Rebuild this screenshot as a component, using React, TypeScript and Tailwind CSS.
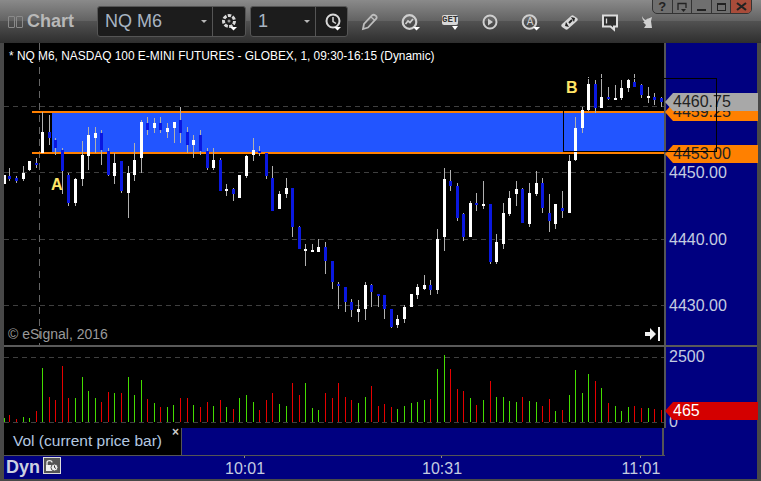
import React from 'react'

// x, wick top, wick bottom, body top, body bottom, 1 = up (white) 0 = down (blue)
const candles: number[][] = [
  [4,175,184,175,184,1],[9,168,181,176,179,0],[16,176,183,178,181,0],[23,166,181,173,179,1],[29,161,171,161,170,1],
  [36,158,168,163,165,0],[42,112,153,132,153,1],[49,115,145,132,138,0],[55,138,155,140,148,0],[62,148,194,150,171,0],
  [68,173,206,175,203,0],[75,178,206,179,203,1],[82,141,186,155,179,1],[88,127,170,135,156,1],[95,127,153,133,138,1],
  [101,130,165,133,150,0],[108,148,176,151,175,0],[114,153,184,163,176,1],[121,161,193,161,191,0],[128,166,218,173,193,1],
  [134,143,181,160,175,1],[141,120,173,122,158,1],[147,117,135,123,130,0],[154,118,133,123,128,1],[160,117,133,123,130,0],
  [167,123,138,128,132,1],[174,122,143,122,128,1],[180,107,143,120,133,0],[187,127,153,132,145,0],[193,135,158,140,145,1],
  [200,130,155,135,151,0],[207,148,170,151,168,0],[213,148,170,160,168,1],[220,158,191,160,191,0],[226,184,196,189,191,1],
  [233,188,201,189,194,0],[239,175,198,175,198,1],[246,155,178,156,176,1],[253,138,161,150,155,1],[259,146,156,151,153,0],
  [266,153,179,153,176,0],[272,166,211,178,211,0],[279,191,209,194,209,1],[286,178,198,188,194,1],[292,188,237,188,227,0],
  [299,226,249,227,249,0],[305,244,266,249,251,1],[312,244,252,250,252,1],[318,239,252,247,252,1],[325,242,274,247,261,0],
  [332,261,289,261,282,0],[338,282,309,284,286,0],[345,287,312,287,302,0],[351,299,317,302,310,0],[358,300,322,309,312,1],
  [365,282,320,285,309,1],[371,284,307,285,292,0],[378,294,307,294,296,0],[384,295,319,295,309,0],[391,309,328,309,327,0],
  [397,315,328,319,325,1],[404,305,323,307,319,1],[411,294,307,294,307,1],[417,284,299,287,295,1],[424,275,290,285,289,1],
  [430,280,295,285,290,0],[437,229,294,239,290,1],[444,168,251,179,237,1],[450,170,191,181,186,0],[457,183,221,186,218,0],
  [463,213,241,214,237,0],[470,201,237,203,237,1],[476,193,211,203,205,0],[483,181,209,204,206,1],[490,204,264,204,262,0],
  [496,234,264,242,262,1],[503,203,249,213,244,1],[509,191,216,198,214,1],[516,181,206,189,194,1],[522,188,223,189,223,0],
  [529,183,227,193,224,1],[536,171,196,183,194,1],[542,178,213,183,208,0],[549,194,232,213,221,0],[555,204,229,204,224,1],
  [562,191,218,208,211,0],[569,155,213,161,213,1],[575,117,161,128,160,1],[582,107,133,110,128,1],[588,77,111,84,110,1],
  [595,80,113,84,108,0],[601,74,108,97,108,1],[608,87,100,97,99,0],[615,85,100,98,100,1],[621,80,100,88,98,1],
  [628,79,92,80,88,1],[634,74,87,82,87,0],[641,84,98,85,95,0],[648,87,103,96,98,1],[654,93,105,97,100,0],[661,97,107,98,102,0],
]

// x, top of bar, 1 = green 0 = red
const volume: number[][] = [
  [4,417,1],[9,414,0],[16,418,0],[23,416,1],[29,417,1],[36,410,0],[42,367,1],[49,396,0],[55,399,0],[62,365,0],
  [68,397,0],[75,397,1],[82,376,1],[88,390,1],[95,397,1],[101,401,0],[108,391,0],[114,392,1],[121,392,0],[128,376,1],
  [134,394,1],[141,379,1],[147,398,0],[154,402,1],[160,406,0],[167,406,1],[173,404,1],[180,397,0],[187,397,0],[193,404,1],
  [200,406,0],[207,401,0],[213,405,1],[220,399,0],[226,406,1],[233,408,0],[239,397,1],[246,394,1],[253,401,1],[259,409,0],
  [266,399,0],[272,392,0],[279,403,1],[286,405,1],[292,382,0],[299,394,0],[305,382,1],[312,407,1],[318,409,1],[325,392,0],
  [332,397,0],[338,382,0],[345,396,0],[351,399,0],[358,402,1],[365,396,1],[371,385,0],[378,405,0],[384,403,0],[391,406,0],
  [397,408,1],[404,405,1],[411,402,1],[417,401,1],[424,399,1],[430,398,0],[437,368,1],[444,354,1],[450,368,0],[457,388,0],
  [463,390,0],[470,397,1],[476,404,0],[483,399,1],[490,380,0],[496,396,1],[503,396,1],[509,400,1],[516,401,1],[522,396,0],
  [529,400,1],[536,401,1],[542,405,0],[549,398,0],[555,410,1],[562,409,0],[569,394,1],[575,369,1],[582,392,1],[588,373,1],
  [595,380,0],[601,387,1],[608,402,0],[615,405,1],[621,410,1],[628,406,1],[634,405,0],[641,407,0],[648,407,1],[654,408,0],[661,409,0],
]

const Caret = () => <span className="w-0 h-0 border-x-[3px] border-x-transparent border-t-[3px] border-t-[#b8b8b8]" />

const ToolIcon = ({ className, children }: { className: string; children: React.ReactNode }) => (
  <svg width="20" height="20" viewBox="0 0 20 20" fill="none" className={className}>{children}</svg>
)

const DropMark = () => <path d="M13 15h7l-3.500 3.500z" fill="#fff" />

const PriceTag = ({ top, color, text, label }: { top: number; color: string; text: string; label: string }) => (
  <div
    className={`absolute left-[-1px] w-[93px] h-[18px] pl-[8px] text-[16px] leading-[18px] [clip-path:polygon(0_50%,8px_0,100%_0,100%_100%,8px_100%)] ${color} ${text}`}
    style={{ top }}
  >
    {label}
  </div>
)

const App = () => {
  return (
    <div className="relative w-[761px] h-[481px] overflow-hidden flex flex-col bg-[#484848] font-['Liberation_Sans',Arial,sans-serif]">

      {/* toolbar */}
      <div className="h-[43px] shrink-0 flex items-center bg-[linear-gradient(#8a8a8a_0,#626262_21px,#525252_21px,#2e2e2e_43px)]">
        <div className="ml-[8px] flex gap-[1px]">
          <span className="w-[7px] h-[12px] border border-[#8a8a8a] rounded-[1px]" />
          <span className="w-[7px] h-[12px] border border-[#8a8a8a] rounded-[1px]" />
        </div>
        <span className="ml-[4px] w-[70px] text-[18px] font-bold text-[#b8b8b8]">Chart</span>

        <div className="w-[149px] h-[31px] flex items-center rounded-[3px] border border-[#555] bg-[#1c1c1c]">
          <span className="ml-[7px] w-[96px] text-[18px] text-[#a8b4c2]">NQ M6</span>
          <Caret />
          <div className="ml-[5px] w-px h-full bg-[#555]" />
          <svg width="20" height="20" viewBox="0 0 20 20" fill="none" className="ml-[7px]">
            <circle cx="9" cy="9" r="5.500" stroke="#d8d8d8" strokeWidth="3" strokeDasharray="3.500 1.300" />
            <circle cx="9" cy="9" r="1.500" fill="#999" />
            <path d="M10 15h7l-3.500 3.500z" fill="#fff" />
          </svg>
        </div>

        <div className="ml-[4px] w-[98px] h-[31px] flex items-center rounded-[3px] border border-[#555] bg-[#1c1c1c]">
          <span className="ml-[7px] w-[46px] text-[18px] text-[#a8b4c2]">1</span>
          <Caret />
          <div className="ml-[5px] w-px h-full bg-[#555]" />
          <svg width="20" height="20" viewBox="0 0 20 20" fill="none" className="ml-[8px]">
            <circle cx="9" cy="9" r="6.500" stroke="#d8d8d8" strokeWidth="2" />
            <path d="M9 5v4.500l3 2" stroke="#d8d8d8" strokeWidth="1.500" />
            <path d="M10 15h7l-3.500 3.500z" fill="#fff" />
          </svg>
        </div>

        {/* pencil */}
        <ToolIcon className="ml-[12px]">
          <path d="M3 17l1-5 8-8.500c1-1 2-1 3.500 0s1.500 2.500.5 3.500l-8 8.500z" stroke="#bdbdbd" strokeWidth="1.800" />
          <path d="M11 5l4 3.500" stroke="#bdbdbd" strokeWidth="1.200" />
        </ToolIcon>
        {/* chart circle */}
        <ToolIcon className="ml-[20px]">
          <circle cx="9.500" cy="10" r="6.800" stroke="#cfcfcf" strokeWidth="2.200" />
          <path d="M5.500 12l2.500-3 2 1.500 3-3.500" stroke="#cfcfcf" strokeWidth="1.700" />
          <DropMark />
        </ToolIcon>
        {/* GET */}
        <div className="ml-[22px] relative w-[20px] h-[20px] flex justify-start">
          <span className="mt-[3px] w-[16px] h-[10px] rounded-[2px] bg-[#d8d8d8] text-[9px] leading-[10px] font-bold text-[#333] text-center font-['Liberation_Mono',monospace]">GET</span>
          <span className="absolute left-[10px] top-[14px] w-0 h-0 border-x-[3px] border-x-transparent border-t-[4px] border-t-white" />
        </div>
        {/* play */}
        <ToolIcon className="ml-[18px]">
          <circle cx="10" cy="10" r="6.500" stroke="#cfcfcf" strokeWidth="2" />
          <path d="M8 6.500l5 3.500-5 3.500z" fill="#cfcfcf" />
        </ToolIcon>
        {/* alert */}
        <div className="ml-[20px] relative w-[20px] h-[20px]">
          <svg width="20" height="20" viewBox="0 0 20 20" fill="none" className="absolute inset-0">
            <circle cx="9.500" cy="10" r="6.800" stroke="#cfcfcf" strokeWidth="2" />
            <DropMark />
          </svg>
          <span className="absolute left-[5px] top-[4px] w-[10px] text-center text-[10px] leading-[12px] text-[#cfcfcf]">A</span>
        </div>
        {/* diamond */}
        <ToolIcon className="ml-[20px]">
          <path d="M2 12l9-8c1-1 2-1 3 0l3 2c1 1 1 2 0 3l-9 8c-1 1-2 1-3 0l-3-2c-1-1-1-2 0-3z" fill="#d8d8d8" />
          <path d="M11 5l4 1-1 4zM9 15l-4-1 1-4z" fill="#222" />
          <path d="M9 11l3-3" stroke="#222" strokeWidth="2" />
        </ToolIcon>
        {/* comment */}
        <ToolIcon className="ml-[20px]">
          <path d="M3 3.500h14v11h-3v3l-3.500-3H3z" stroke="#dcdcdc" strokeWidth="2" fill="#2e2e2e" />
          <path d="M6.500 6.500v5" stroke="#dcdcdc" strokeWidth="1.300" />
        </ToolIcon>
        {/* twitter */}
        <ToolIcon className="ml-[20px]">
          <path d="M2 4c1 2 2 3.500 4 4 .5-1 1.500-1.500 2.500-1.500L12 5l-1 4 1 7H4l2-3-3-3c1 0 1 0 1.500-.5C3 8.500 2 6.500 2 4z" fill="#cfcfcf" />
        </ToolIcon>
      </div>

      {/* window buttons */}
      <div className="absolute top-[-1px] left-[652px] w-[100px] h-[15px] flex rounded-b-[5px] border border-[#333] bg-[#6f6f6f] overflow-hidden">
        <span className="w-[20px] border-r border-[#333] text-center text-[13px] leading-[14px] font-bold text-[#222]">?</span>
        <span className="w-[20px] border-r border-[#333] flex items-center justify-center">
          <svg width="12" height="12" viewBox="0 0 12 12" fill="none">
            <path d="M2 9V2.500h8V7" stroke="#222" strokeWidth="1.300" />
            <path d="M5 8h5L7.500 11z" fill="#222" />
          </svg>
        </span>
        <span className="w-[20px] border-r border-[#333] flex items-end justify-center pb-[2px]">
          <span className="w-[9px] h-[2px] bg-[#222]" />
        </span>
        <span className="w-[20px] border-r border-[#333] flex items-center justify-center">
          <span className="w-[9px] h-[8px] border border-[#222] border-t-2" />
        </span>
        <span className="w-[20px] flex items-center justify-center bg-[#a84c3a]">
          <svg width="11" height="9" viewBox="0 0 11 9" fill="none">
            <path d="M1 1l9 7M10 1l-9 7" stroke="#222" strokeWidth="2.200" />
          </svg>
        </span>
      </div>

      {/* price pane */}
      <div className="ml-[4px] mr-[4px] h-[302px] shrink-0 flex">
        <div className="relative w-[660px] bg-black overflow-hidden">
          <svg width="660" height="302" viewBox="4 43 660 302" className="absolute inset-0">
            {[106, 172, 239, 305].map((y) => (
              <line key={y} x1="4" x2="664" y1={y + 0.5} y2={y + 0.5} stroke="#3f3f3f" strokeDasharray="5 4" />
            ))}
            <line x1="39.500" x2="39.500" y1="43" y2="345" stroke="#666" strokeDasharray="7 5" />
            <rect x="52" y="113" width="612" height="39" fill="#2255ff" />
            <rect x="32" y="111" width="632" height="2" fill="#ff8000" />
            <rect x="32" y="152" width="632" height="2" fill="#ff8000" />
            {candles.map(([x, wt, wb, bt, bb, up]) => (
              <g key={x}>
                <line x1={x + 0.5} x2={x + 0.5} y1={wt} y2={wb} stroke="#b0b0b0" />
                <rect x={x - 1} y={bt} width="3" height={bb - bt} fill={up ? '#ffffff' : '#0a18e0'} />
              </g>
            ))}
          </svg>
          <span className="absolute left-[5px] top-[6px] text-[11.900px] leading-[14px] whitespace-nowrap text-white">* NQ M6, NASDAQ 100 E-MINI FUTURES - GLOBEX, 1, 09:30-16:15 (Dynamic)</span>
          <span className="absolute left-[47px] top-[134px] text-[16px] leading-[16px] font-bold text-[#ffe566]">A</span>
          <span className="absolute left-[562px] top-[37px] text-[16px] leading-[16px] font-bold text-[#ffe566]">B</span>
          <span className="absolute left-[4px] top-[283px] text-[14px] leading-[16px] text-[#9a9a9a]">© eSignal, 2016</span>
          <svg width="16" height="14" viewBox="0 0 16 14" className="absolute left-[641px] top-[284px]">
            <path d="M0 5h5V1l6 6-6 6V9H0z" fill="#f0f0f0" />
            <rect x="13" y="0" width="2" height="14" fill="#f0f0f0" />
          </svg>
        </div>
        <div className="relative flex-1 border-l-2 border-[#555] bg-[#000080] text-[16px] leading-[18px] text-[#c4cce0]">
          <span className="absolute left-[3px] top-[121px]">4450.00</span>
          <span className="absolute left-[3px] top-[188px]">4440.00</span>
          <span className="absolute left-[3px] top-[254px]">4430.00</span>
          <PriceTag top={60} color="bg-[#ff8000]" text="text-[#222]" label="4459.25" />
          <PriceTag top={50} color="bg-[#a8a8a8]" text="text-[#222]" label="4460.75" />
          <PriceTag top={102} color="bg-[#ff8000]" text="text-[#222]" label="4453.00" />
        </div>
      </div>

      <div className="ml-[4px] mr-[4px] h-[2px] shrink-0 bg-[#5a5a5a]" />

      {/* volume pane */}
      <div className="ml-[4px] mr-[4px] h-[81px] shrink-0 flex">
        <div className="relative w-[660px] bg-black">
          <svg width="660" height="81" viewBox="4 346 660 81" className="absolute inset-0">
            <line x1="4" x2="664" y1="356.500" y2="356.500" stroke="#3f3f3f" strokeDasharray="5 4" />
            {volume.map(([x, top, up]) => (
              <rect key={x} x={x} y={top} width="1" height={421 - top} fill={up ? '#44dd00' : '#e60000'} />
            ))}
            <line x1="4" x2="664" y1="421.500" y2="421.500" stroke="#3f3f3f" strokeDasharray="5 4" />
          </svg>
        </div>
        <div className="relative flex-1 border-l-2 border-[#555] bg-[#000080] text-[16px] leading-[18px] text-[#c4cce0]">
          <span className="absolute left-[3px] top-[1px]">2500</span>
          <span className="absolute left-[3px] top-[66px]">0</span>
          <PriceTag top={55} color="bg-[#d40000]" text="text-white" label="465" />
        </div>
      </div>

      {/* study tab row */}
      <div className="ml-[4px] mr-[4px] h-[27px] shrink-0 flex">
        <div className="relative w-[178px] bg-black border-r border-[#555]">
          <span className="absolute left-[9px] top-[4px] text-[15.500px] leading-[18px] whitespace-nowrap text-[#b4c8e0]">Vol (current price bar)</span>
          <span className="absolute right-[2px] top-[-2px] text-[12px] leading-[12px] font-bold text-[#ccc]">×</span>
        </div>
        <div className="w-[482px] bg-[#000080] border-r-2 border-[#555]" />
        <div className="flex-1 bg-[#000080]" />
      </div>

      {/* time axis */}
      <div className="relative ml-[4px] mr-[4px] h-[24px] shrink-0 bg-[#000080]">
        <div className="h-px w-[661px] bg-[#555]" />
        <span className="absolute left-[2px] top-[2px] text-[18px] leading-[20px] font-bold text-[#ccd0e0]">Dyn</span>
        <span className="absolute left-[39px] top-[2px] w-[18px] h-[17px] border border-[#ddd] bg-[#555] flex items-center justify-center">
          <svg width="14" height="13" viewBox="0 0 14 13" fill="none">
            <path d="M2 6V3.500C2 1 7 1 7 3.500" stroke="#eee" strokeWidth="1.300" />
            <rect x="1" y="6" width="7" height="6" fill="#eee" />
            <circle cx="9.500" cy="8.500" r="3.500" fill="#eee" stroke="#555" />
            <path d="M9.500 6.500v2l1.500 1" stroke="#333" />
          </svg>
        </span>
        {[[241, '10:01'], [438, '10:31'], [637, '11:01']].map(([x, t]) => (
          <React.Fragment key={t}>
            <span className="absolute top-[1px] w-px h-[2px] bg-[#888]" style={{ left: Number(x) - 1 }} />
            <span className="absolute top-[5px] w-[40px] text-center text-[16px] leading-[18px] text-[#c4cce0]" style={{ left: Number(x) - 20 }}>{t}</span>
          </React.Fragment>
        ))}
      </div>

      {/* drawn box, sits over both chart and axis */}
      <div className="absolute left-[563px] top-[78px] w-[154px] h-[74px] border border-black" />
    </div>
  )
}

export default App
